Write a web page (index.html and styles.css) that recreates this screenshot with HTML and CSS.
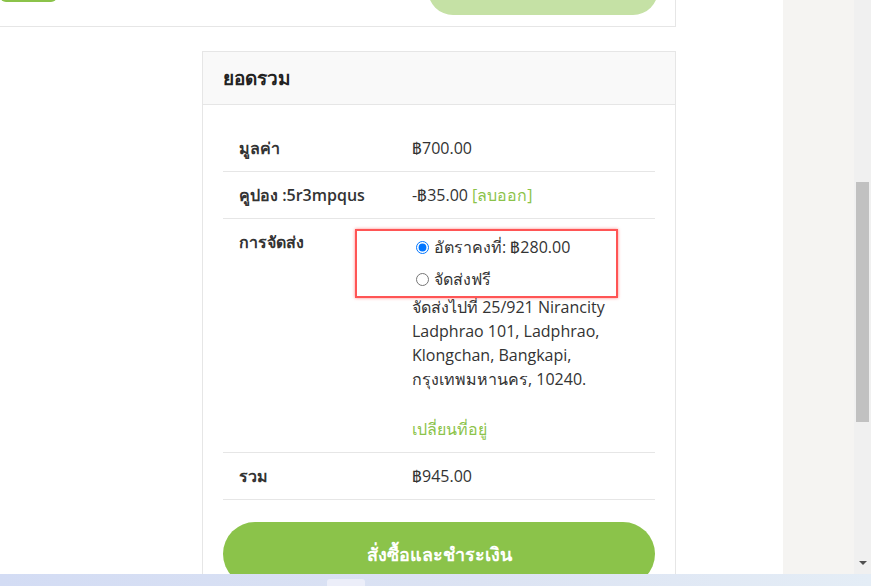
FILE: index.html
```html
<!DOCTYPE html>
<html lang="th">
<head>
<meta charset="utf-8">
<title>ยอดรวม</title>
<link rel="stylesheet" href="styles.css">
</head>
<body>
<div class="page">
  <main class="main">
    <div class="prev-card">
      <span class="prev-btn-left"></span>
      <span class="prev-btn-right"></span>
    </div>
    <section class="totals">
      <h2 class="totals-head">ยอดรวม</h2>
      <div class="totals-body">
        <div class="row">
          <div class="label">มูลค่า</div>
          <div class="value">฿700.00</div>
        </div>
        <div class="row">
          <div class="label">คูปอง :5r3mpqus</div>
          <div class="value">-฿35.00 <a class="link" href="#">[ลบออก]</a></div>
        </div>
        <div class="row">
          <div class="label">การจัดส่ง</div>
          <div class="value">
            <ul class="methods">
              <li><input type="radio" name="ship" checked><label>อัตราคงที่: <span>฿280.00</span></label></li>
              <li><input type="radio" name="ship"><label>จัดส่งฟรี</label></li>
            </ul>
            <p class="dest">จัดส่งไปที่ 25/921 Nirancity Ladphrao 101, Ladphrao, Klongchan, Bangkapi, กรุงเทพมหานคร, 10240.</p>
            <a class="link change" href="#">เปลี่ยนที่อยู่</a>
          </div>
        </div>
        <div class="row">
          <div class="label">รวม</div>
          <div class="value">฿945.00</div>
        </div>
        <button class="checkout">สั่งซื้อและชำระเงิน</button>
      </div>
    </section>
  </main>
  <aside class="side"></aside>
  <div class="scrollbar">
    <div class="thumb"></div>
    <div class="arrow"></div>
  </div>
</div>
<div class="highlight"></div>
<div class="taskbar"><span class="task-item"></span></div>
</body>
</html>
```
FILE: styles.css
```css
* { box-sizing: border-box; }
html, body { margin: 0; padding: 0; }
body {
  width: 871px;
  height: 586px;
  overflow: hidden;
  font-family: "Open Sans", "Noto Sans", sans-serif;
  font-size: 16px;
  color: #333;
  background: #fff;
}
.page { display: flex; height: 586px; }
.main { width: 783px; background: #fff; }
.side { width: 71px; background: #f5f4f2; }
.scrollbar { width: 17px; background: #f0f0f0; position: relative; padding: 182px 2px 0 2px; }
.thumb { width: 13px; height: 240px; background: #c1c1c1; }
.arrow {
  position: absolute; left: 5px; top: 561px;
  width: 0; height: 0;
  border-left: 4px solid transparent; border-right: 4px solid transparent;
  border-top: 4px solid #505050;
}
.prev-card {
  width: 676px;
  height: 27px;
  border-right: 1px solid #e6e6e6;
  border-bottom: 1px solid #e6e6e6;
  display: flex;
  justify-content: space-between;
  align-items: flex-start;
  overflow: hidden;
}
.prev-btn-left {
  display: block; width: 57px; height: 12px; margin-top: -10px;
  background: #8bc34a; border-radius: 0 0 6px 6px;
}
.prev-btn-right {
  display: block; width: 230px; height: 50px; margin-top: -35px; margin-right: 17px;
  background: #c5e1a5; border-radius: 30px;
}
.totals {
  margin: 24px 0 0 202px;
  width: 474px;
  border: 1px solid #e6e6e6;
}
.totals-head {
  margin: 0;
  height: 53px;
  padding: 0 20px;
  background: #f9f9f9;
  border-bottom: 1px solid #e6e6e6;
  font-size: 19px;
  font-weight: 700;
  line-height: 53px;
  color: #222;
}
.totals-body { padding: 20px 20px 0; }
.row {
  display: grid;
  grid-template-columns: 173px 1fr;
  border-bottom: 1px solid #e6e6e6;
  line-height: 24px;
}
.label { padding: 11px 16px; font-weight: 600; color: #333; }
.value { padding: 11px 16px; }
.link { color: #8bc34a; text-decoration: none; }
.methods { list-style: none; margin: 5px 0 0; padding: 0; }
.methods li { line-height: 24px; margin-bottom: 8px; }
.methods li:last-child { margin-bottom: 0; }
.methods li input { margin: 3px 5px 0 4px; vertical-align: -1px; }
.dest { margin: 4px 0 26px; line-height: 24px; }
.change { display: block; }
.checkout {
  display: block;
  width: 100%;
  height: 64px;
  margin-top: 22px;
  border: 0;
  border-radius: 32px;
  background: #8bc34a;
  color: #fff;
  font-family: inherit;
  font-size: 18px;
  font-weight: 700;
}
.highlight {
  position: absolute;
  left: 355px; top: 229px;
  width: 263px; height: 69px;
  border: 2px solid #f55;
  box-shadow: 0 0 3px rgba(255, 60, 60, 0.6);
}
.taskbar {
  position: fixed;
  left: 0; right: 0; bottom: 0;
  height: 12px;
  background: linear-gradient(90deg, #d3dcf4 0%, #dce3f3 55%, #e4edf6 100%);
}
.task-item {
  position: absolute;
  left: 327px; top: 5px;
  width: 38px; height: 7px;
  background: #eceef9;
  border-radius: 3px 3px 0 0;
}
```
